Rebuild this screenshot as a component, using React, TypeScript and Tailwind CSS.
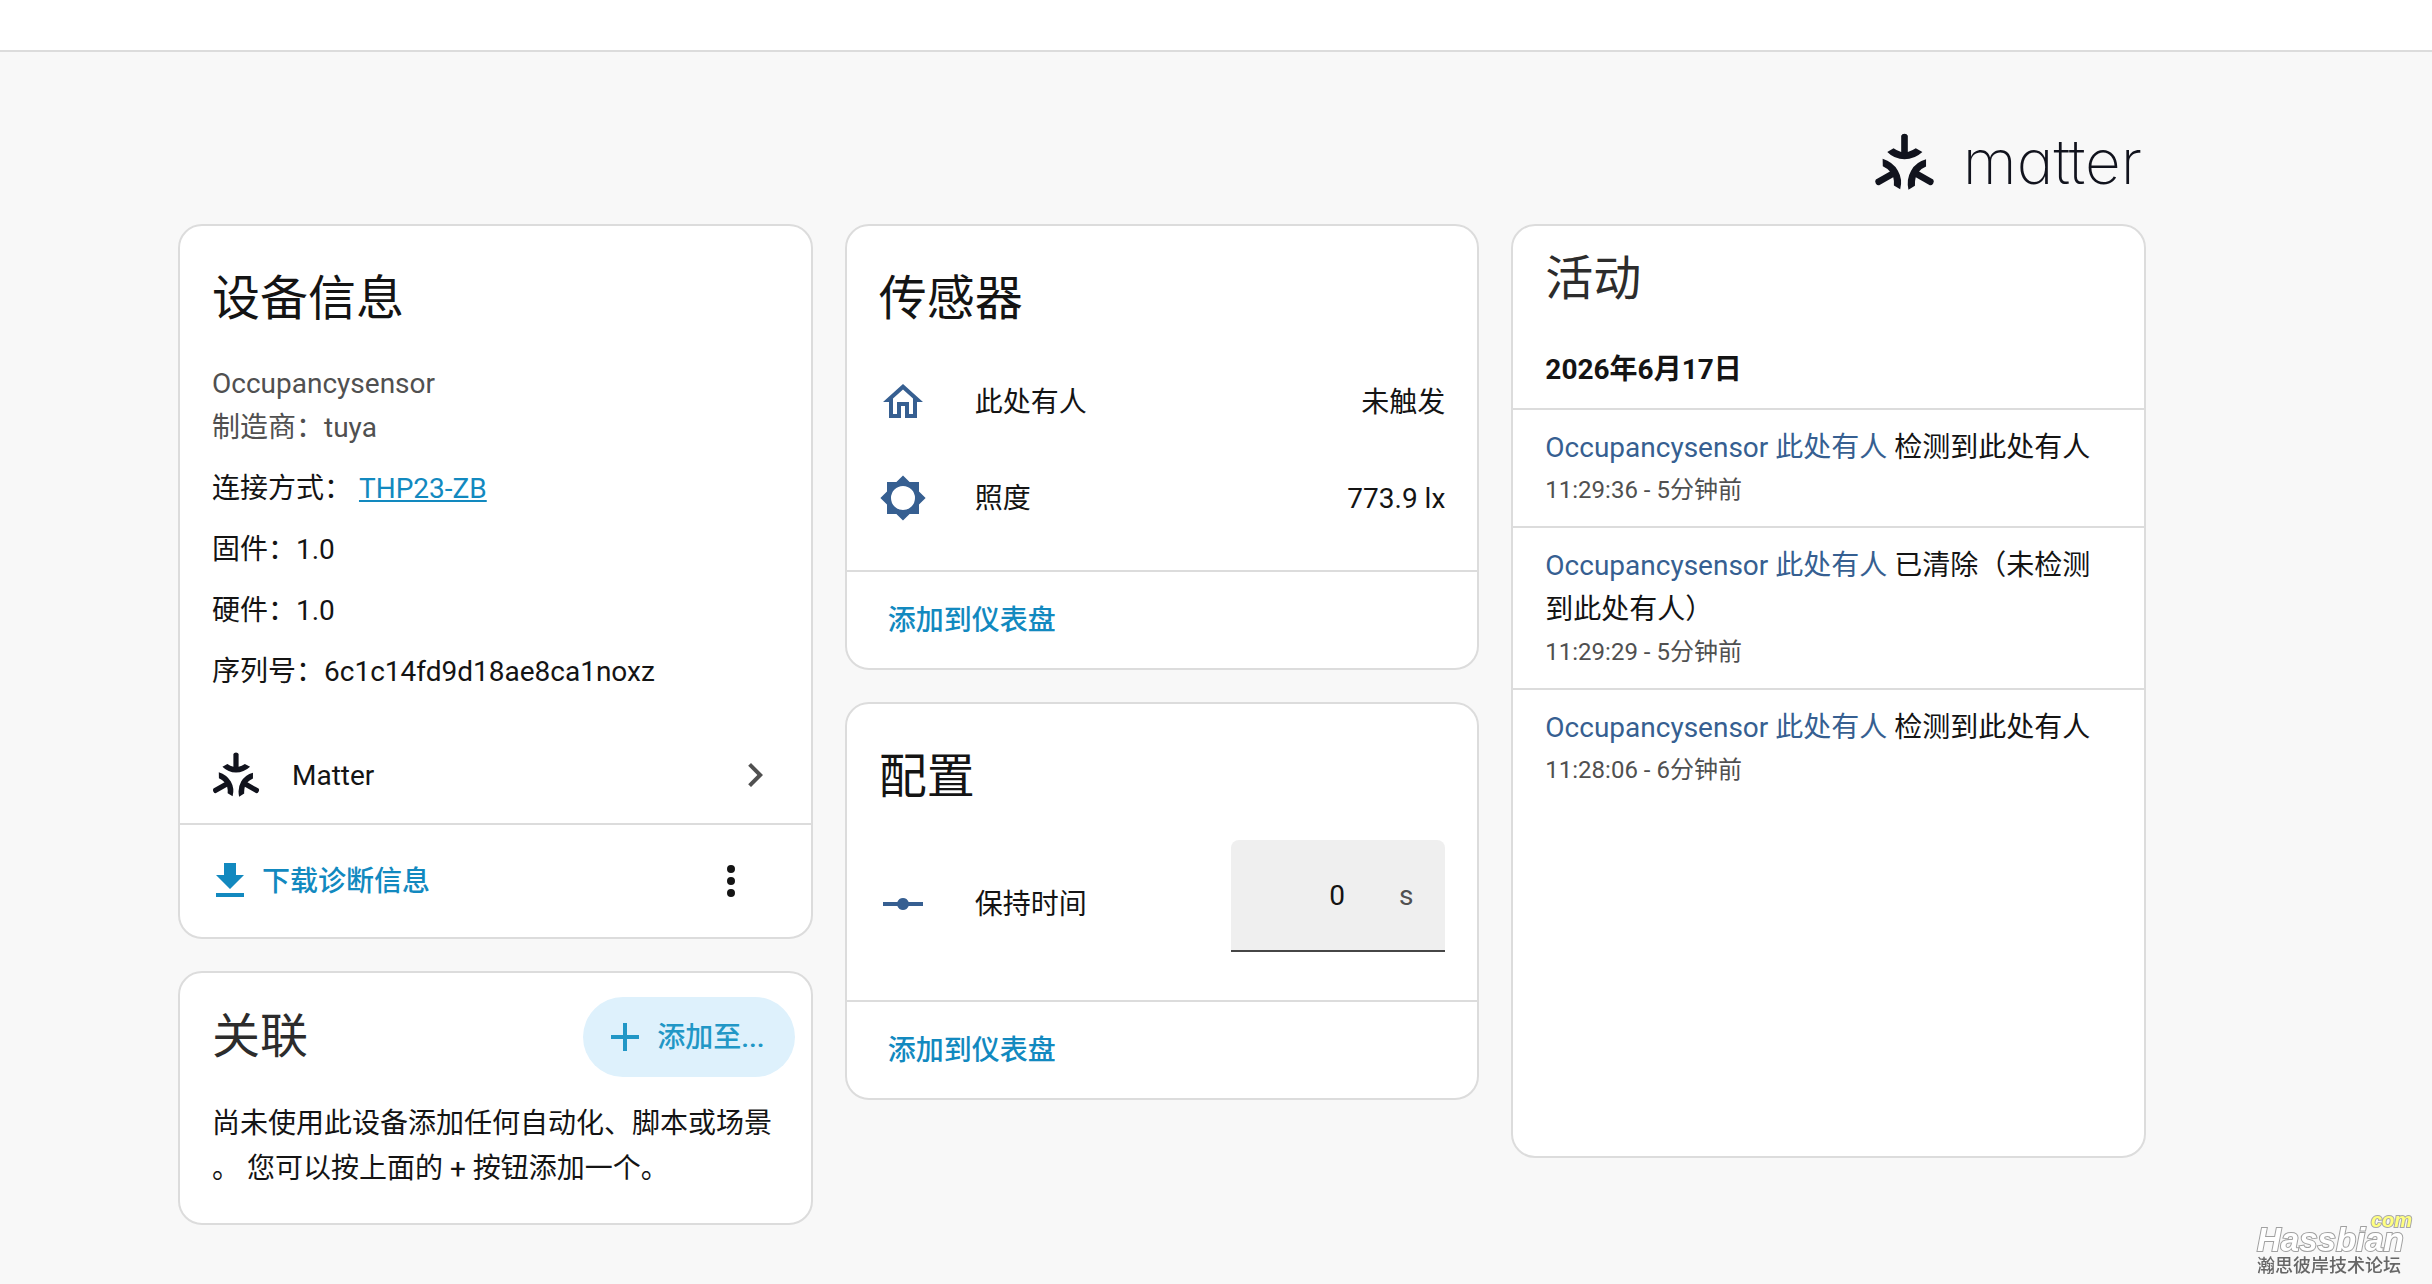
import type { ReactNode } from 'react'

// Material Design icon paths, 24x24
const ICONS = {
  home: 'M12 5.69L17 10.19V18H15V12H9V18H7V10.19L12 5.69M12 3L2 12H5V20H11V14H13V20H19V12H22',
  brightness:
    'M12,18A6,6 0 0,1 6,12A6,6 0 0,1 12,6A6,6 0 0,1 18,12A6,6 0 0,1 12,18M20,15.31L23.31,12L20,8.69V4H15.31L12,0.69L8.69,4H4V8.69L0.69,12L4,15.31V20H8.69L12,23.31L15.31,20H20V15.31Z',
  rayVertex:
    'M2,11H9.17C9.58,9.83 10.69,9 12,9C13.31,9 14.42,9.83 14.83,11H22V13H14.83C14.42,14.17 13.31,15 12,15C10.69,15 9.58,14.17 9.17,13H2V11Z',
  chevronRight: 'M8.59,16.58L13.17,12L8.59,7.41L10,6L16,12L10,18L8.59,16.58Z',
  download: 'M5,20H19V18H5M19,9H15V3H9V9H5L12,16L19,9Z',
  dots: 'M12,16A2,2 0 0,1 14,18A2,2 0 0,1 12,20A2,2 0 0,1 10,18A2,2 0 0,1 12,16M12,10A2,2 0 0,1 14,12A2,2 0 0,1 12,14A2,2 0 0,1 10,12A2,2 0 0,1 12,10M12,4A2,2 0 0,1 14,6A2,2 0 0,1 12,8A2,2 0 0,1 10,6A2,2 0 0,1 12,4Z',
  plus: 'M19,13H13V19H11V13H5V11H11V5H13V11H19V13Z',
}

function Icon({ name, className = '' }: { name: keyof typeof ICONS; className?: string }) {
  return (
    <svg viewBox="0 0 24 24" fill="currentColor" aria-hidden="true" className={`size-12 shrink-0 ${className}`}>
      <path d={ICONS[name]} />
    </svg>
  )
}

// One arrow, repeated three times around the centre
const MATTER_ARM =
  'M131 125L150 114Q161 122 173 125V76Q175 70 183 70Q191 70 193 76V125Q205 122 217 114L237 125Q213 147 183 147Q153 147 131 125Z'

function MatterMark({ className = '' }: { className?: string }) {
  return (
    <svg viewBox="91 68 184 176" fill="currentColor" aria-hidden="true" className={`shrink-0 text-[#11131d] ${className}`}>
      <path d={MATTER_ARM} />
      <path d={MATTER_ARM} transform="rotate(120 183 170)" />
      <path d={MATTER_ARM} transform="rotate(240 183 170)" />
    </svg>
  )
}

function Card({ children, className = '' }: { children: ReactNode; className?: string }) {
  return (
    <section className={`rounded-3xl border-2 border-[#dcdcdc] bg-white ${className}`}>{children}</section>
  )
}

function CardTitle({ children }: { children: ReactNode }) {
  return <h1 className="px-8 pt-[25px] pb-[15px] text-5xl leading-24">{children}</h1>
}

function DashboardAction() {
  return (
    <div className="flex h-[98px] items-center border-t-2 border-[#dcdcdc] px-[17px]">
      <button type="button" className="px-6 font-medium text-[#1289bf]">
        添加到仪表盘
      </button>
    </div>
  )
}

const SENSORS = [
  { icon: 'home', name: '此处有人', state: '未触发' },
  { icon: 'brightness', name: '照度', state: '773.9 lx' },
] as const

const ACTIVITY = [
  { message: '检测到此处有人', time: '11:29:36 - 5分钟前' },
  { message: '已清除（未检测到此处有人）', time: '11:29:29 - 5分钟前' },
  { message: '检测到此处有人', time: '11:28:06 - 6分钟前' },
]

function DeviceInfoCard() {
  return (
    <Card>
      <CardTitle>设备信息</CardTitle>
      <div className="flex flex-col gap-[17px] px-8 pb-[33px] leading-11">
        <div className="text-[#505050]">
          <p>Occupancysensor</p>
          <p>制造商：tuya</p>
        </div>
        <p>
          连接方式：{' '}
          <a href="#hub" className="text-[#1289bf] underline">
            THP23-ZB
          </a>
        </p>
        <p>固件：1.0</p>
        <p>硬件：1.0</p>
        <p>序列号：6c1c14fd9d18ae8ca1noxz</p>
      </div>
      <a href="#matter" className="flex h-24 items-center gap-8 px-8">
        <MatterMark className="w-12" />
        <span className="flex-1">Matter</span>
        <Icon name="chevronRight" className="text-[#505050]" />
      </a>
      <div className="flex h-[114px] items-center justify-between border-t-2 border-[#dcdcdc] pr-14 pl-[26px]">
        <button type="button" className="flex items-center gap-2 font-medium text-[#1289bf]">
          <Icon name="download" />
          下载诊断信息
        </button>
        <button type="button" aria-label="更多">
          <Icon name="dots" />
        </button>
      </div>
    </Card>
  )
}

function RelatedCard() {
  return (
    <Card>
      <div className="flex items-center justify-between py-6 pr-4 pl-8">
        <h1 className="text-5xl text-[#2c2c2c]">关联</h1>
        <button
          type="button"
          className="flex h-20 items-center gap-2 rounded-full bg-[#def1fc] pr-[30px] pl-[18px] font-medium text-[#2197c6]"
        >
          <Icon name="plus" />
          添加至...
        </button>
      </div>
      <p className="px-8 pb-8 [line-break:anywhere]">
        尚未使用此设备添加任何自动化、脚本或场景。 您可以按上面的 + 按钮添加一个。
      </p>
    </Card>
  )
}

function SensorsCard() {
  return (
    <Card>
      <CardTitle>传感器</CardTitle>
      <div className="flex flex-col gap-4 px-8 pb-8">
        {SENSORS.map((s) => (
          <div key={s.name} className="flex h-20 items-center gap-12">
            <Icon name={s.icon} className="text-[#365f91]" />
            <span className="flex-1">{s.name}</span>
            <span>{s.state}</span>
          </div>
        ))}
      </div>
      <DashboardAction />
    </Card>
  )
}

function ConfigCard() {
  return (
    <Card>
      <CardTitle>配置</CardTitle>
      <div className="px-8 pb-8">
        <div className="flex h-32 items-center gap-12">
          <Icon name="rayVertex" className="text-[#365f91]" />
          <label htmlFor="hold-time" className="flex-1">
            保持时间
          </label>
          <div className="flex h-28 w-[214px] items-center gap-[54px] self-start rounded-t-lg border-b-2 border-[#464646] bg-[#efefef] px-8">
            <input
              id="hold-time"
              inputMode="numeric"
              defaultValue="0"
              className="w-full min-w-0 bg-transparent text-right outline-none"
            />
            <span className="text-[#505050]">s</span>
          </div>
        </div>
      </div>
      <DashboardAction />
    </Card>
  )
}

function ActivityCard() {
  return (
    <Card className="min-h-[934px]">
      <h1 className="px-8 pt-[17px] text-5xl leading-18 text-[#2c2c2c]">活动</h1>
      <h2 className="px-8 pt-8 pb-[15px] leading-[46px] font-bold">2026年6月17日</h2>
      <ul>
        {ACTIVITY.map((entry) => (
          <li key={entry.time} className="border-t-2 border-[#dcdcdc] px-8 py-4">
            <p className="leading-11">
              <a href="#entity" className="text-[#365f91]">
                Occupancysensor 此处有人
              </a>{' '}
              {entry.message}
            </p>
            <p className="text-2xl leading-10 text-[#505050]">{entry.time}</p>
          </li>
        ))}
      </ul>
    </Card>
  )
}

function Watermark() {
  return (
    <div className="fixed right-5 bottom-[6px] flex w-[155px] flex-col font-['Liberation_Sans','Noto_Sans_CJK_SC',sans-serif]">
      <div className="self-end text-xl leading-4 font-bold text-[#ffff80] italic [-webkit-text-stroke:2px_#a8a8a8] [paint-order:stroke_fill]">
        com
      </div>
      <div className="text-[33px] leading-6 font-bold text-white italic [-webkit-text-stroke:2px_#a0a0a0] [paint-order:stroke_fill]">
        Hassbian
      </div>
      <div className="pt-[2px] text-lg leading-6 font-medium text-[#666]">瀚思彼岸技术论坛</div>
    </div>
  )
}

export default function App() {
  return (
    <div className="min-h-screen bg-[#f8f8f8] font-['Roboto','Noto_Sans_CJK_SC',sans-serif] text-[28px] leading-[45px] text-[#141414]">
      <header className="h-[52px] border-b-2 border-[#dcdcdc] bg-white" />
      <main className="pr-[108px] pb-12">
        <div className="mx-auto max-w-[2000px] px-4">
          <div className="flex h-[172px] items-end justify-end pr-1 pb-8">
            <div className="flex items-center gap-7">
              <MatterMark className="w-[61px]" />
              <span className="font-['Inter',sans-serif] text-[62px] leading-[60px] font-extralight text-[#11131d] [font-feature-settings:'cv11']">
                matter
              </span>
            </div>
          </div>
          <div className="grid grid-cols-3 items-start gap-8">
            <div className="flex flex-col gap-8">
              <DeviceInfoCard />
              <RelatedCard />
            </div>
            <div className="flex flex-col gap-8">
              <SensorsCard />
              <ConfigCard />
            </div>
            <ActivityCard />
          </div>
        </div>
      </main>
      <Watermark />
    </div>
  )
}
